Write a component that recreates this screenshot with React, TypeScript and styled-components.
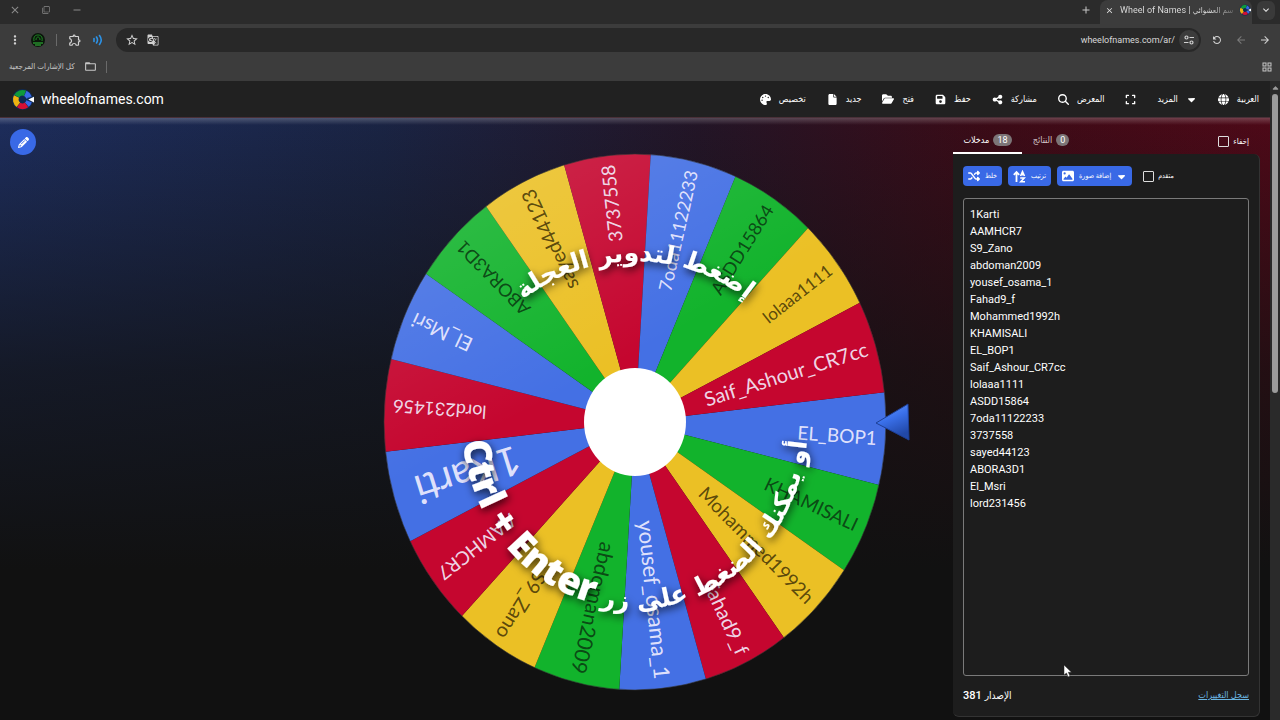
import React from 'react';
import styled, { createGlobalStyle } from 'styled-components';
import {
  FaPalette, FaFile, FaFolderOpen, FaFloppyDisk, FaShareNodes, FaMagnifyingGlass,
  FaExpand, FaGlobe, FaShuffle, FaImage, FaCaretDown, FaCaretUp, FaPencil,
} from 'react-icons/fa6';
import {
  MdClose, MdFilterNone, MdRemove, MdMoreVert, MdOutlineExtension, MdStarBorder,
  MdGTranslate, MdFolderOpen, MdAdd, MdKeyboardArrowDown, MdRefresh, MdArrowBack,
  MdArrowForward, MdOutlineGridView,
} from 'react-icons/md';

const site = `Roboto, 'DejaVu Sans Condensed', sans-serif`;

const Global = createGlobalStyle`
  * { box-sizing: border-box; }
  body { margin: 0; background: #111; color: #fff; font-family: ${site}; overflow: hidden; }
  button { border: 0; background: none; color: inherit; font: inherit; padding: 0; cursor: pointer; }
  svg { display: block; flex: none; }
`;

const Page = styled.div`display: flex; flex-direction: column; height: 100vh; min-height: 480px;`;

const Spacer = styled.div`flex: 1;`;

const TitleBar = styled.div`
  display: flex; align-items: center; height: 24px; padding: 0 5px 0 8px;
  background: #2b2b2b; color: #8b8b8b;
`;
const WindowButton = styled.button`
  display: grid; place-items: center; width: 14px; height: 20px; margin-right: 17px; margin-bottom: 4px;
`;
const NewTab = styled.button`
  display: grid; place-items: center; width: 20px; height: 20px; margin-right: 4px; margin-bottom: 4px; color: #c9c9c9;
`;
const Tab = styled.div`
  display: flex; align-items: center; gap: 6px; width: 152px; height: 24px; padding: 0 8px 4px 5px;
  background: #3c3c3c; border-radius: 8px 8px 0 0; color: #e3e3e3; font-size: 9px; white-space: nowrap;
`;
const TabTitle = styled.span`
  flex: 1; color: transparent; background: linear-gradient(to right, #e3e3e3 80%, #6a6a6a); background-clip: text;
  bdi { font-size: 8px; }
`;
const TabMenu = styled.button`
  display: grid; place-items: center; width: 18px; height: 19px; margin: 0 0 4px 5px;
  background: #3a3a3a; border-radius: 6px; color: #e3e3e3;
`;

const Toolbar = styled.div`
  display: flex; align-items: center; height: 32px; padding: 0 3px 0 9px; background: #3c3c3c; color: #d2d2d2;
`;
const IconButton = styled.button<{ $dim?: boolean }>`
  display: grid; place-items: center; width: 24px; height: 24px; color: ${p => (p.$dim ? '#7b7b7b' : '#d2d2d2')};
`;
const Extensions = styled.div`display: flex; align-items: center; width: 107px; margin-left: -6px;`;
const Rule = styled.span`width: 1px; height: 12px; margin: 0 6px; background: #6a6a6a;`;
const Address = styled.div`
  display: flex; flex: 1; align-items: center; height: 24px; padding: 0 2px 0 4px; margin: 0 4px 0 6px;
  background: #282828; border-radius: 12px;
`;
const Url = styled.input`
  flex: 1; min-width: 0; border: 0; background: none; color: #d8d8d8; font: 9px ${site}; text-align: right; padding: 0 4px; outline: 0;
`;
const SiteInfo = styled.button`
  display: grid; place-items: center; width: 20px; height: 20px; border-radius: 50%; background: #3c3c3c; color: #d2d2d2;
`;
const TranslateButton = styled(IconButton)`width: 18px;`;
const ReloadIcon = styled(MdRefresh)`transform: scaleX(-1);`;

const Bookmarks = styled.div`
  display: flex; align-items: center; gap: 3px; height: 25px; padding: 0 7px 4px 9px;
  background: #3c3c3c; color: #c6c6c6; font-size: 8px;
`;
const BookmarkFolder = styled.button`display: flex; align-items: center; gap: 9px;`;

const Viewport = styled.div`display: flex; flex: 1; min-height: 0;`;
const Site = styled.div`display: flex; flex: 1; flex-direction: column; min-width: 0;`;

const Scrollbar = styled.div`
  display: flex; flex-direction: column; align-items: center; gap: 1px; width: 10px; padding-top: 3px; background: #2a2a2a; color: #9c9c9c;
`;
const Thumb = styled.div`width: 6px; height: 47%; border-radius: 3px; background: #9c9c9c;`;

const Header = styled.header`
  display: flex; align-items: center; height: 37px; padding: 0 11px 0 11px; background: #212121;
  border-bottom: 1px solid #4a3038;
`;
const Brand = styled.a`
  display: flex; align-items: center; gap: 7px; color: #fff; font-size: 14px; font-weight: 400; text-decoration: none;
`;
const Nav = styled.nav`display: flex; align-items: center; gap: 21px;`;
const NavItem = styled.button`
  display: flex; align-items: center; gap: 8px; font-size: 9px; font-weight: 500; white-space: nowrap;
`;

const Main = styled.main`
  display: grid; grid-template-columns: minmax(0, 1fr) minmax(0, 560px) minmax(307px, 1fr);
  flex: 1; min-height: 0; padding: 0 10px 3px;
  background:
    linear-gradient(to bottom, rgba(255, 255, 255, 0.22), rgba(255, 255, 255, 0) 7px),
    linear-gradient(to bottom, rgba(17, 17, 17, 0) 0, rgba(17, 17, 17, 0.7) 42%, #111 75%),
    linear-gradient(to right, #1d2d5c 0, #1a2444 30%, #231527 55%, #3c0b17 78%, #4e0918 100%);
`;
const EditButton = styled.button`
  display: grid; place-items: center; width: 26px; height: 26px; margin-top: 11px; border-radius: 50%; background: #3969e6;
`;
const Stage = styled.div`padding-top: 24px;`;
const WheelSvg = styled.svg`width: 100%; height: auto; overflow: visible;`;

const Panel = styled.section`
  display: flex; flex-direction: column; justify-self: end; width: 307px; min-height: 0; padding-top: 10px;
`;
const Tabs = styled.div`display: flex; align-items: center; height: 26px; padding-right: 11px;`;
const PanelTab = styled.button<{ $active?: boolean }>`
  display: flex; align-items: center; justify-content: center; gap: 4px; height: 26px; width: ${p => (p.$active ? 69 : 58)}px;
  font-size: 9px; color: ${p => (p.$active ? '#fff' : '#d5c6c9')};
  border-bottom: 2px solid ${p => (p.$active ? '#fff' : 'transparent')};
`;
const Badge = styled.span`
  padding: 0 4px; border-radius: 6px; background: #7c7577; color: #fff; font-size: 9px; line-height: 12px;
`;
const Check = styled.label<{ $small?: boolean }>`
  display: flex; align-items: center; gap: 4px; font-size: ${p => (p.$small ? 7 : 8)}px; white-space: nowrap;
  input { appearance: none; width: 11px; height: 11px; margin: 0; border: 1px solid #ddd; border-radius: 1px; }
`;
const Card = styled.div`
  display: flex; flex: 1; flex-direction: column; min-height: 0; padding: 12px 10px 0 10px;
  background: #1d1d1d; border: solid #333; border-width: 0 1px 1px 0; border-radius: 0 6px 6px 6px;
`;
const Actions = styled.div`
  display: flex; align-items: center; gap: 6px; height: 20px; margin-bottom: 12px;
  ${Check} { margin-left: 5px; }
`;
const Action = styled.button`
  display: flex; align-items: center; justify-content: center; gap: 5px; height: 20px; padding: 0 5px;
  border-radius: 4px; background: #3969e6; font-size: 7px; font-weight: 500; white-space: nowrap;
`;
const Names = styled.textarea`
  flex: 1; min-height: 0; padding: 7px 6px; resize: none; outline: 0; overflow: hidden;
  border: 1px solid #7a7a7a; border-radius: 3px; background: #1d1d1d; color: #fff; font: 11px/17px Roboto, sans-serif;
`;
const Footer = styled.footer`
  display: flex; align-items: center; justify-content: space-between; height: 40px; padding-bottom: 2px;
`;
const Changes = styled.a`color: #69b4e0; font-size: 9px;`;
const Version = styled.span`
  display: flex; align-items: center; gap: 3px; font-size: 11px; font-weight: 500;
  bdi { font-size: 10px; }
`;
const Pointer = styled.svg`position: fixed; left: 1063px; top: 664px; pointer-events: none;`;

const RED = '#c5062f', BLUE = '#4470e4', GREEN = '#12b32c', YELLOW = '#ebc025';

type Slice = { name: string; color: string; size: number; reach?: number };
const slices: Slice[] = [
  { name: 'EL_BOP1', color: BLUE, size: 19 },
  { name: 'KHAMISALI', color: GREEN, size: 19 },
  { name: 'Mohammed1992h', color: YELLOW, size: 19 },
  { name: 'Fahad9_f', color: RED, size: 20 },
  { name: 'yousef_osama_1', color: BLUE, size: 22 },
  { name: 'abdoman2009', color: GREEN, size: 21 },
  { name: 'S9_Zano', color: YELLOW, size: 20 },
  { name: 'AAMHCR7', color: RED, size: 19 },
  { name: '1Karti', color: BLUE, size: 40, reach: 0.91 },
  { name: 'lord231456', color: RED, size: 18 },
  { name: 'El_Msri', color: BLUE, size: 20 },
  { name: 'ABORA3D1', color: GREEN, size: 18 },
  { name: 'sayed44123', color: YELLOW, size: 20 },
  { name: '3737558', color: RED, size: 19 },
  { name: '7oda11122233', color: BLUE, size: 18 },
  { name: 'ASDD15864', color: GREEN, size: 18 },
  { name: 'lolaaa1111', color: YELLOW, size: 17 },
  { name: 'Saif_Ashour_CR7cc', color: RED, size: 20 },
];

const entries = [
  '1Karti', 'AAMHCR7', 'S9_Zano', 'abdoman2009', 'yousef_osama_1', 'Fahad9_f', 'Mohammed1992h', 'KHAMISALI',
  'EL_BOP1', 'Saif_Ashour_CR7cc', 'lolaaa1111', 'ASDD15864', '7oda11122233', '3737558', 'sayed44123',
  'ABORA3D1', 'El_Msri', 'lord231456',
];

const RX = 251, RY = 268, STEP = 20, START = -6.4;
const at = (deg: number, k = 1) => {
  const a = (deg * Math.PI) / 180;
  return [RX * k * Math.cos(a), RY * k * Math.sin(a)];
};

function Wheel() {
  return (
    <WheelSvg viewBox="-280 -280 560 560" role="img" aria-label="Wheel of Names">
      <defs>
        <linearGradient id="arrow" x1="0" y1="0" x2="0.4" y2="1">
          <stop offset="0" stopColor="#6ba0ff" />
          <stop offset="0.5" stopColor="#3a70ea" />
          <stop offset="1" stopColor="#2148a8" />
        </linearGradient>
        <linearGradient id="sheen" x1="0" y1="0" x2="0.5" y2="1">
          <stop offset="0" stopColor="#fff" stopOpacity="0.16" />
          <stop offset="0.5" stopColor="#fff" stopOpacity="0" />
        </linearGradient>
        <filter id="shade" x="-20%" y="-20%" width="140%" height="140%">
          <feDropShadow dx="1" dy="3" stdDeviation="4" floodColor="#000" floodOpacity="0.8" />
        </filter>
        <path id="top" d="M-182 21A182 182 0 0 1 182 21" />
        <path id="bottom" d="M-173 0A173 187 0 0 0 173 0" />
      </defs>
      {slices.map((s, i) => {
        const a = START + i * STEP;
        const [x1, y1] = at(a);
        const [x2, y2] = at(a + STEP);
        return <path key={s.name} fill={s.color} d={`M0 0L${x1} ${y1}A${RX} ${RY} 0 0 1 ${x2} ${y2}Z`} />;
      })}
      <ellipse rx={RX} ry={RY} fill="url(#sheen)" />
      <ellipse rx={RX} ry={RY} fill="none" stroke="#333" strokeOpacity="0.6" strokeWidth="1" />
      {slices.map((s, i) => {
        const mid = START + (i + 0.5) * STEP;
        const [x, y] = at(mid, s.reach ?? 0.965);
        const angle = (Math.atan2(y, x) * 180) / Math.PI;
        const dark = s.color === GREEN || s.color === YELLOW;
        const ink = s.color === GREEN ? '#0a3d12' : '#4a3a08';
        return (
          <text
            key={s.name} transform={`translate(${x} ${y}) rotate(${angle})`} textAnchor="end" dy="0.35em"
            fontFamily="Lato, sans-serif" fontSize={s.size} fill={dark ? ink : '#f4f0ff'} fillOpacity="0.9"
          >
            {s.name}
          </text>
        );
      })}
      <ellipse rx="51" ry="54" fill="#fff" />
      <g fill="#fff" filter="url(#shade)" fontFamily="'DejaVu Sans', sans-serif" fontWeight="700" fontSize="25" direction="rtl">
        <text textAnchor="middle"><textPath href="#top" startOffset="50%">إضغط لتدوير العجلة</textPath></text>
        <text textAnchor="middle">
          <textPath href="#bottom" startOffset="50%">
            أو يمكنك الضغط على زر <tspan fontFamily="'Open Sans', sans-serif" fontWeight="800" fontSize="38">Ctrl + Enter</tspan>
          </textPath>
        </text>
      </g>
      <path d="M241 1L273 -18L274 18Z" fill="url(#arrow)" stroke="#1d3f96" strokeWidth="1" />
    </WheelSvg>
  );
}

function Logo({ size }: { size: number }) {
  const arc = (from: number, to: number) => {
    const p = (d: number) => `${12 + 7 * Math.cos((d * Math.PI) / 180)} ${12 + 7 * Math.sin((d * Math.PI) / 180)}`;
    return `M${p(from)}A7 7 0 0 1 ${p(to)}`;
  };
  return (
    <svg width={size} height={size} viewBox="0 0 24 24" fill="none" strokeWidth="6">
      <circle cx="12" cy="12" r="11" fill="#0e2a52" />
      <path d={arc(-18, 50)} stroke="#3969e6" />
      <path d={arc(53, 125)} stroke="#d50f35" />
      <path d={arc(128, 207)} stroke="#eeb211" />
      <path d={arc(210, 292)} stroke="#0f9a3b" />
      <path d={arc(295, 342)} stroke="#3969e6" />
      <path d="M14 12L24 8V16Z" fill="#0e2a52" />
      <path d="M18 12L24 9V15Z" fill="#fff" />
    </svg>
  );
}

const Avatar = () => (
  <svg width="14" height="14" viewBox="0 0 14 14" fill="none">
    <circle cx="7" cy="7" r="7" fill="#0a160a" />
    <path d="M3 8C2 3 5 2 7 2s5 1 4 6M5 7c0-4 4-4 4 0" stroke="#1f8a26" />
    <path d="M2 10h10M4 12h6" stroke="#35c43d" />
  </svg>
);
const Sound = () => (
  <svg width="12" height="12" viewBox="0 0 12 12" fill="none" stroke="#2c93e8" strokeWidth="1.6" strokeLinecap="round">
    <path d="M2 4.500v3M4.500 3q2 3 0 6M7.500 1.500q3.500 4.500 0 9" />
  </svg>
);
const Tune = () => (
  <svg width="10" height="10" viewBox="0 0 10 10" fill="none" stroke="currentColor" strokeWidth="1.2">
    <circle cx="2.500" cy="2.500" r="1.500" /><path d="M5.500 2.500H10M0 7.500H4.500" /><circle cx="7.500" cy="7.500" r="1.500" />
  </svg>
);
const Sort = () => (
  <svg width="13" height="13" viewBox="0 0 13 13" fill="none" stroke="currentColor" strokeWidth="1.800">
    <path d="M3.500 12V2M0.800 4.800L3.500 2L6.200 4.800" />
    <path d="M7.500 6L9.500 1.500L11.500 6M8 4.800H11M7.200 8H11.300L7.700 11.800H12" strokeWidth="1.500" />
  </svg>
);

export default function App() {
  return (
    <Page>
      <Global />
      <TitleBar>
        <WindowButton aria-label="Close"><MdClose size={12} /></WindowButton>
        <WindowButton aria-label="Restore"><MdFilterNone size={8} /></WindowButton>
        <WindowButton aria-label="Minimize"><MdRemove size={12} /></WindowButton>
        <Spacer />
        <NewTab aria-label="New tab"><MdAdd size={12} /></NewTab>
        <Tab>
          <MdClose size={9} />
          <TabTitle>Wheel of Names | <bdi>سم العشوائي</bdi></TabTitle>
          <Logo size={12} />
        </Tab>
        <TabMenu aria-label="Tabs"><MdKeyboardArrowDown size={12} /></TabMenu>
      </TitleBar>
      <Toolbar>
        <Extensions>
          <IconButton aria-label="Menu"><MdMoreVert size={14} /></IconButton>
          <IconButton aria-label="Profile"><Avatar /></IconButton>
          <Rule />
          <IconButton aria-label="Extensions"><MdOutlineExtension size={14} /></IconButton>
          <IconButton aria-label="Sound"><Sound /></IconButton>
        </Extensions>
        <Address>
          <IconButton aria-label="Bookmark"><MdStarBorder size={14} /></IconButton>
          <TranslateButton aria-label="Translate"><MdGTranslate size={12} /></TranslateButton>
          <Url aria-label="Address" defaultValue="wheelofnames.com/ar/" />
          <SiteInfo aria-label="Site information"><Tune /></SiteInfo>
        </Address>
        <IconButton aria-label="Reload"><ReloadIcon size={12} /></IconButton>
        <IconButton aria-label="Forward" $dim><MdArrowBack size={12} /></IconButton>
        <IconButton aria-label="Back"><MdArrowForward size={12} /></IconButton>
      </Toolbar>
      <Bookmarks>
        <BookmarkFolder>كل الإشارات المرجعية <MdFolderOpen size={13} /></BookmarkFolder>
        <Rule />
        <Spacer />
        <MdOutlineGridView size={12} />
      </Bookmarks>
      <Viewport>
        <Site>
          <Header>
            <Brand href="#"><Logo size={23} />wheelofnames.com</Brand>
            <Spacer />
            <Nav>
              <NavItem><FaPalette size={11} />تخصيص</NavItem>
              <NavItem><FaFile size={11} />جديد</NavItem>
              <NavItem><FaFolderOpen size={12} />فتح</NavItem>
              <NavItem><FaFloppyDisk size={11} />حفظ</NavItem>
              <NavItem><FaShareNodes size={11} />مشاركة</NavItem>
              <NavItem><FaMagnifyingGlass size={11} />المعرض</NavItem>
              <NavItem aria-label="Fullscreen"><FaExpand size={11} /></NavItem>
              <NavItem>المزيد<FaCaretDown size={11} /></NavItem>
              <NavItem><FaGlobe size={11} />العربية</NavItem>
            </Nav>
          </Header>
          <Main>
            <EditButton aria-label="Edit"><FaPencil size={11} /></EditButton>
            <Stage><Wheel /></Stage>
            <Panel>
              <Tabs>
                <PanelTab $active>مدخلات <Badge>18</Badge></PanelTab>
                <PanelTab>النتائج <Badge>0</Badge></PanelTab>
                <Spacer />
                <Check><input type="checkbox" />إخفاء</Check>
              </Tabs>
              <Card>
                <Actions>
                  <Action><FaShuffle size={12} />خلط</Action>
                  <Action><Sort />ترتيب</Action>
                  <Action><FaImage size={12} />إضافة صورة<FaCaretDown size={11} /></Action>
                  <Check $small><input type="checkbox" />متقدم</Check>
                </Actions>
                <Names aria-label="Entries" spellCheck={false} defaultValue={entries.join('\n')} />
                <Footer>
                  <Version>381 <bdi>الإصدار</bdi></Version>
                  <Changes href="#">سجل التغييرات</Changes>
                </Footer>
              </Card>
            </Panel>
          </Main>
        </Site>
        <Scrollbar><FaCaretUp size={9} /><Thumb /></Scrollbar>
      </Viewport>
      <Pointer width="9" height="14" viewBox="0 0 9 14">
        <path d="M1 1V11L3.500 9L5 13L7 12L5.300 8.300H8.500Z" fill="#fff" stroke="#222" strokeWidth="0.500" />
      </Pointer>
    </Page>
  );
}
